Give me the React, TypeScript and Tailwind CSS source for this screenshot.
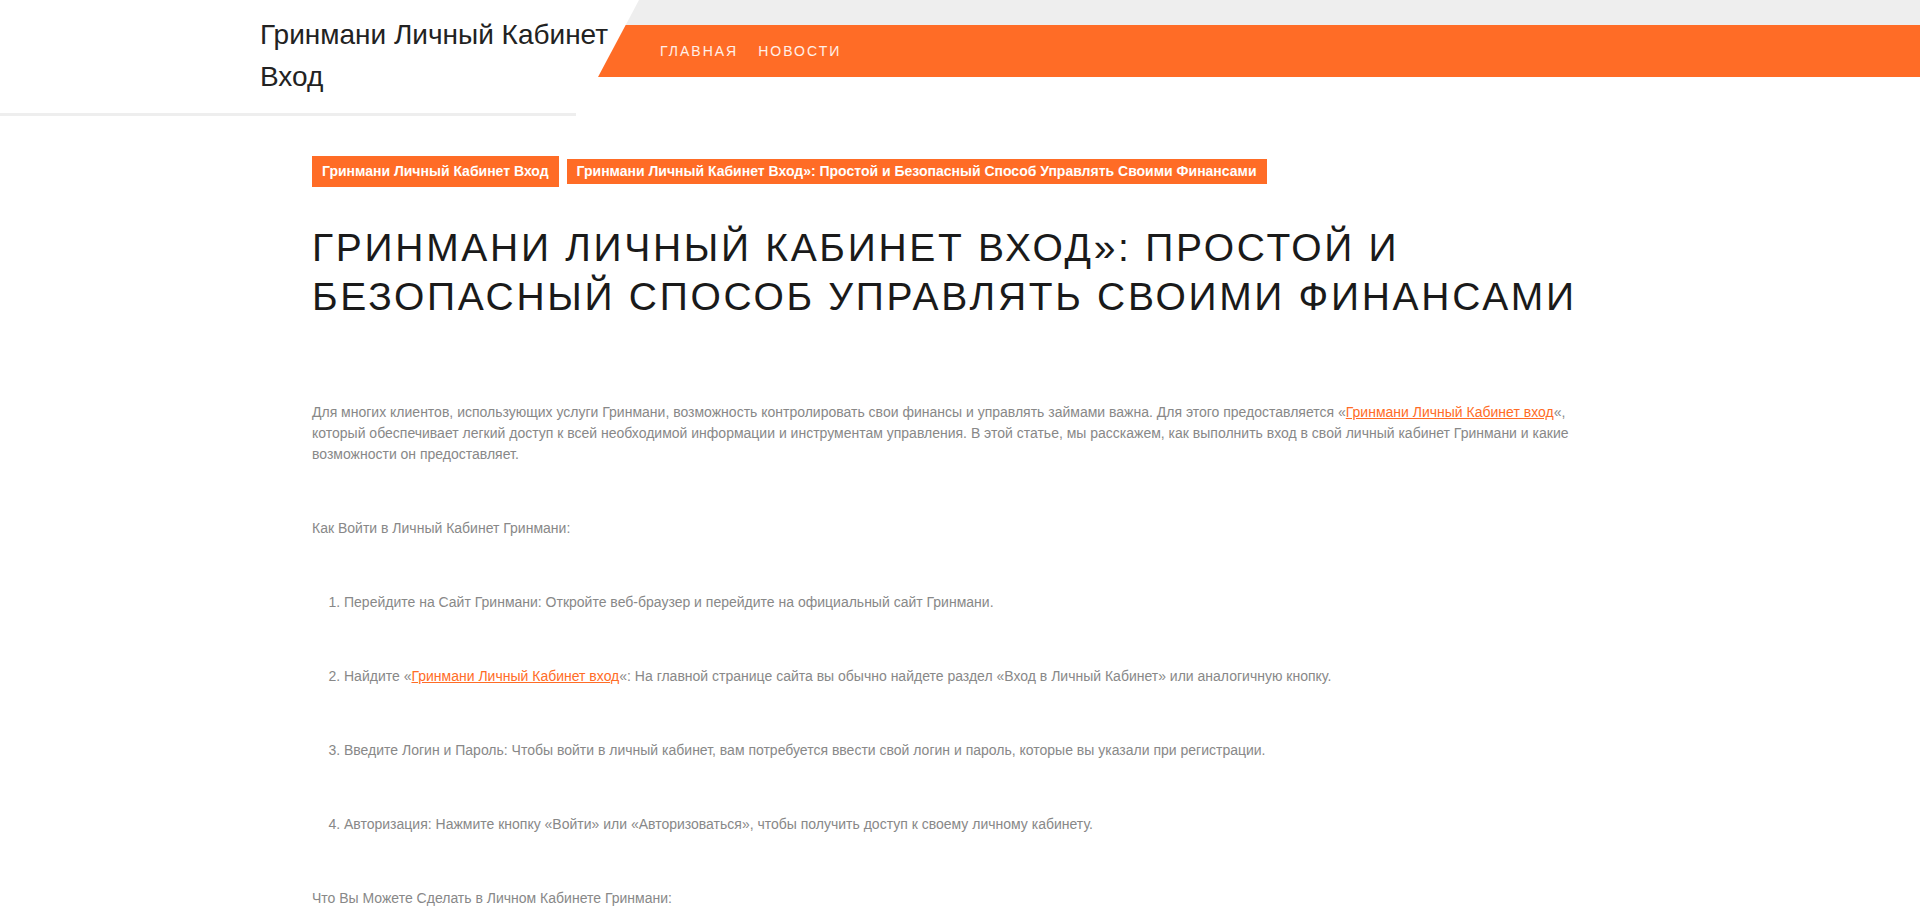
export default function App() {
  const navItems = ["Главная", "Новости"];
  const steps = [
    <>Перейдите на Сайт Гринмани: Откройте веб-браузер и перейдите на официальный сайт Гринмани.</>,
    <>
      Найдите «
      <a href="#" className="text-[#ff6c26] underline">
        Гринмани Личный Кабинет вход
      </a>
      «: На главной странице сайта вы обычно найдете раздел «Вход в Личный Кабинет» или аналогичную кнопку.
    </>,
    <>Введите Логин и Пароль: Чтобы войти в личный кабинет, вам потребуется ввести свой логин и пароль, которые вы указали при регистрации.</>,
    <>Авторизация: Нажмите кнопку «Войти» или «Авторизоваться», чтобы получить доступ к своему личному кабинету.</>,
  ];

  return (
    <div className="min-h-[920px] bg-white font-['Liberation_Sans',Arial,sans-serif]">
      {/* header */}
      <header className="flex items-start">
        <div className="w-[598px] shrink-0">
          <div className="w-[576px] border-b-[3px] border-[#eeeeee] pb-[15px] pl-[260px] pt-[14px]">
            <a href="#" className="block w-[370px] text-[28px] leading-[42px] text-[#222]">
              Гринмани Личный Кабинет Вход
            </a>
          </div>
        </div>
        <div className="flex-1 [clip-path:polygon(41px_0,100%_0,100%_100%,0_100%)]">
          <div className="h-[25px] bg-[#eeeeee]" />
          <nav className="flex h-[52px] items-center gap-[20px] bg-[#ff6c26] pl-[62px]">
            {navItems.map((n) => (
              <a
                key={n}
                href="#"
                className="text-[14px] uppercase tracking-[2px] text-white/90"
              >
                {n}
              </a>
            ))}
          </nav>
        </div>
      </header>

      {/* article */}
      <main className="mx-auto w-[1296px] pb-10">
        <div className="mt-[40px] flex items-center gap-[8px]">
          <a href="#" className="bg-[#ff6c26] px-[10px] py-[7px] text-[14px] font-bold leading-[17px] text-white">
            Гринмани Личный Кабинет Вход
          </a>
          <span className="bg-[#ff6c26] px-[10px] py-[4px] text-[14px] font-bold leading-[17px] text-white">
            Гринмани Личный Кабинет Вход»: Простой и Безопасный Способ Управлять Своими Финансами
          </span>
        </div>

        <h1 className="mt-[36px] text-[39px] uppercase leading-[49px] tracking-[2.7px] text-[#1a1a1a]">
          Гринмани Личный Кабинет Вход»: Простой и Безопасный Способ Управлять Своими Финансами
        </h1>

        <div className="mt-[81px] flex flex-col gap-[53px] text-[14px] leading-[21px] text-[#888]">
          <p>
            Для многих клиентов, использующих услуги Гринмани, возможность контролировать свои финансы и
            управлять займами важна. Для этого предоставляется «
            <a href="#" className="text-[#ff6c26] underline">
              Гринмани Личный Кабинет вход
            </a>
            «, который обеспечивает легкий доступ к всей необходимой информации и инструментам управления. В
            этой статье, мы расскажем, как выполнить вход в свой личный кабинет Гринмани и какие возможности он
            предоставляет.
          </p>
          <p>Как Войти в Личный Кабинет Гринмани:</p>
          <ol className="list-decimal space-y-[53px] pl-[32px]">
            {steps.map((s, i) => (
              <li key={i}>{s}</li>
            ))}
          </ol>
          <p>Что Вы Можете Сделать в Личном Кабинете Гринмани:</p>
        </div>
      </main>
    </div>
  );
}
